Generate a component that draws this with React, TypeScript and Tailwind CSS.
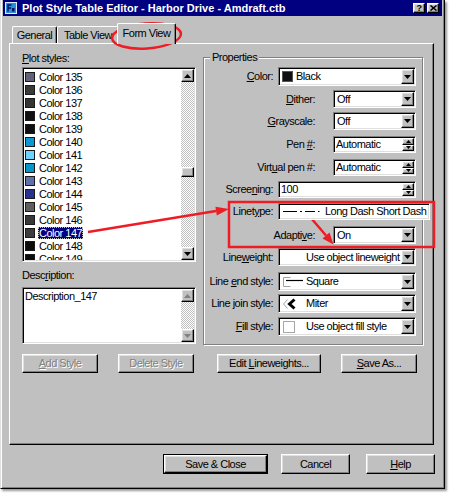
import React from "react";

const sunken =
  "border border-t-[#808080] border-l-[#808080] border-r-white border-b-white shadow-[inset_1px_1px_0_#000,inset_-1px_-1px_0_#dfdfdf] p-[1px]";
const raised =
  "border border-t-white border-l-white border-r-black border-b-black shadow-[inset_-1px_-1px_0_#808080,inset_1px_1px_0_#dfdfdf] bg-[#c0c0c0]";
const checker =
  "bg-[image:repeating-conic-gradient(#c0c0c0_0_25%,#ffffff_0_50%)] bg-[length:2px_2px]";
const disabledText = "text-[#808080] [text-shadow:1px_1px_0_#ffffff]";

function Tri({ up, color = "#000", small }: { up?: boolean; color?: string; small?: boolean }) {
  const w = small ? 5 : 7;
  const h = small ? 3 : 4;
  return (
    <svg width={w} height={h} viewBox={`0 0 ${w} ${h}`} className="block">
      {up ? (
        <path d={`M0 ${h}H${w}L${w / 2} 0z`} fill={color} />
      ) : (
        <path d={`M0 0H${w}L${w / 2} ${h}z`} fill={color} />
      )}
    </svg>
  );
}

function ScrollBtn({ up, disabled }: { up?: boolean; disabled?: boolean }) {
  return (
    <div className={`${raised} h-[13px] w-[13px] flex items-center justify-center shrink-0`}>
      <Tri up={up} color={disabled ? "#808080" : "#000"} />
    </div>
  );
}

function Combo({ className, children }: { className: string; children: React.ReactNode }) {
  return (
    <div className={`${sunken} ${className} bg-white flex`}>
      <div className="flex-1 min-w-0 flex items-center whitespace-nowrap overflow-hidden">{children}</div>
      <div className={`${raised} w-[13px] flex items-center justify-center`}>
        <Tri />
      </div>
    </div>
  );
}

function Spin({ className, children }: { className: string; children: React.ReactNode }) {
  return (
    <div className={`${sunken} ${className} bg-white flex`}>
      <div className="flex-1 min-w-0 flex items-center whitespace-nowrap">{children}</div>
      <div className="w-[12px] flex flex-col">
        <div className={`${raised} flex-1 flex items-center justify-center`}>
          <Tri up small />
        </div>
        <div className={`${raised} flex-1 flex items-center justify-center`}>
          <Tri small />
        </div>
      </div>
    </div>
  );
}

function Row({
  label,
  className,
  labelClass,
  children,
}: {
  label: React.ReactNode;
  className: string;
  labelClass: string;
  children: React.ReactNode;
}) {
  return (
    <div className={`flex items-center justify-end ${className}`}>
      <span className={`whitespace-nowrap leading-[13px] ${labelClass}`}>{label}</span>
      {children}
    </div>
  );
}

function Btn({
  className,
  children,
  disabled,
  isDefault,
}: {
  className: string;
  children: React.ReactNode;
  disabled?: boolean;
  isDefault?: boolean;
}) {
  const inner = (
    <div
      className={`${raised} h-full w-full flex items-center justify-center whitespace-nowrap ${
        disabled ? disabledText : ""
      }`}
    >
      <span>{children}</span>
    </div>
  );
  if (isDefault) {
    return <div className={`border border-black ${className}`}>{inner}</div>;
  }
  return <div className={className}>{inner}</div>;
}

const styles = [
  { n: "135", c: "bg-[#62627a]" },
  { n: "136", c: "bg-[#3a3a3a]" },
  { n: "137", c: "bg-[#343434]" },
  { n: "138", c: "bg-[#101010]" },
  { n: "139", c: "bg-[#101010]" },
  { n: "140", c: "bg-[#0a98d0]" },
  { n: "141", c: "bg-[#6cd2ff]" },
  { n: "142", c: "bg-[#0896c8]" },
  { n: "143", c: "bg-[#6070a8]" },
  { n: "144", c: "bg-[#283090]" },
  { n: "145", c: "bg-[#5e5e5e]" },
  { n: "146", c: "bg-[#383838]" },
  { n: "147", c: "bg-[#3c3c3c]" },
  { n: "148", c: "bg-[#0c0c0c]" },
  { n: "149", c: "bg-[#0c0c0c]" },
];

function TitleBar() {
  return (
    <div className="mx-[1px] h-[16px] bg-[#000080] flex items-center pl-[2px] pr-[3px]">
      <svg width="12" height="12" viewBox="0 0 12 12" className="shrink-0">
        <rect x="0.5" y="0.5" width="11" height="11" fill="#2a8fd8" stroke="#d8eeff" />
        <path d="M3 9.5V3h3.5M3 6h3" stroke="#001060" strokeWidth="1.4" fill="none" />
        <rect x="7" y="6" width="2.5" height="3.5" fill="#001060" />
      </svg>
      <span className="ml-[5px] text-white font-bold whitespace-nowrap leading-[14px] tracking-normal">
        Plot Style Table Editor - Harbor Drive - Amdraft.ctb
      </span>
      <div className="ml-auto flex gap-[2px]">
        <div className={`${raised} w-[12px] h-[10px] flex items-center justify-center text-[9px] font-bold leading-none`}>
          ?
        </div>
        <div className={`${raised} w-[12px] h-[10px] flex items-center justify-center`}>
          <svg width="7" height="6" viewBox="0 0 7 6">
            <path d="M0.5 0.5l6 5M6.5 0.5l-6 5" stroke="#000" strokeWidth="1.6" />
          </svg>
        </div>
      </div>
    </div>
  );
}

function Tabs() {
  const tab =
    "h-[17px] border-t border-l border-r border-t-white border-l-white border-r-black shadow-[inset_-1px_0_0_#808080] rounded-t-[2px] flex items-center justify-center whitespace-nowrap";
  return (
    <div className="mt-[7px] h-[20px] flex items-end pl-[10px]">
      <div className={`${tab} w-[45px]`}>General</div>
      <div className={`${tab} w-[62px]`}>Table View</div>
      <div
        className={`${tab} relative z-10 -ml-[2px] w-[59px] h-[21px] -mb-[1px] bg-[#c0c0c0] pb-[2px]`}
      >
        Form View
      </div>
    </div>
  );
}

function LeftColumn() {
  return (
    <div className="w-[174px] flex flex-col">
      <span className="h-[13px] leading-[13px]">
        <span className="underline">P</span>lot styles:
      </span>
      <div className={`${sunken} mt-[2px] h-[195px] bg-white flex`}>
        <div className="flex-1 overflow-hidden pt-[1px]">
          {styles.map((s) => (
            <div key={s.n} className="h-[13px] flex items-center pl-[1px]">
              <span className={`w-[10px] h-[10px] border border-[#1a1a1a] shrink-0 ${s.c}`} />
              {s.n === "147" ? (
                <span className="ml-[3px] px-[1px] leading-[12px] bg-[#000080] text-white outline outline-1 outline-dotted outline-[#c0c0c0] -outline-offset-1">
                  Color {s.n}
                </span>
              ) : (
                <span className="ml-[3px] px-[1px] leading-[12px]">Color {s.n}</span>
              )}
            </div>
          ))}
        </div>
        <div className="w-[13px] flex flex-col">
          <ScrollBtn up />
          <div className={`flex-1 flex flex-col ${checker}`}>
            <div className="h-[85px]" />
            <div className={`${raised} h-[10px]`} />
          </div>
          <ScrollBtn />
        </div>
      </div>
      <span className="mt-[7px] h-[13px] leading-[13px]">
        Desc<span className="underline">r</span>iption:
      </span>
      <div className={`${sunken} mt-[5px] h-[57px] bg-white flex`}>
        <div className="flex-1 pl-[1px] pt-[1px] leading-[13px]">Description_147</div>
        <div className="w-[13px] flex flex-col">
          <ScrollBtn up disabled />
          <div className={`flex-1 ${checker}`} />
          <ScrollBtn disabled />
        </div>
      </div>
      <div className="mt-[10px] flex gap-[20px]">
        <Btn className="w-[76px] h-[19px]" disabled>
          <span className="underline">A</span>dd Style
        </Btn>
        <Btn className="w-[76px] h-[19px]" disabled>
          Delete Style
        </Btn>
      </div>
    </div>
  );
}

function RightColumn() {
  const wide = "mr-[5px]";
  const narrow = "mr-[18px]";
  return (
    <div className="ml-[7px] w-[220px] flex flex-col">
      <div className="relative mt-[5px] h-[288px] border border-[#808080] shadow-[inset_1px_1px_0_#ffffff,1px_1px_0_#ffffff] pt-[9px] pr-[6px] flex flex-col">
        <span className="absolute left-[6px] -top-[7px] px-[2px] bg-[#c0c0c0] leading-[13px]">Properties</span>

        <Row label={<><span className="underline">C</span>olor:</>} className="" labelClass={wide}>
          <Combo className="w-[138px] h-[19px]">
            <span className="ml-[2px] w-[11px] h-[11px] bg-[#101010] border border-[#555] shrink-0" />
            <span className="ml-[3px]">Black</span>
          </Combo>
        </Row>
        <Row label={<><span className="underline">D</span>ither:</>} className="mt-[4px]" labelClass={narrow}>
          <Combo className="w-[83px] h-[18px]">
            <span className="ml-[2px]">Off</span>
          </Combo>
        </Row>
        <Row label={<><span className="underline">G</span>rayscale:</>} className="mt-[4px]" labelClass={narrow}>
          <Combo className="w-[83px] h-[18px]">
            <span className="ml-[2px]">Off</span>
          </Combo>
        </Row>
        <Row label={<>Pen <span className="underline">#</span>:</>} className="mt-[6px]" labelClass={narrow}>
          <Spin className="w-[83px] h-[17px]">
            <span className="ml-[1px]">Automatic</span>
          </Spin>
        </Row>
        <Row label={<>Virt<span className="underline">u</span>al pen #:</>} className="mt-[6px]" labelClass={narrow}>
          <Spin className="w-[83px] h-[17px]">
            <span className="ml-[1px]">Automatic</span>
          </Spin>
        </Row>
        <Row label={<>Scree<span className="underline">n</span>ing:</>} className="mt-[5px]" labelClass={wide}>
          <Spin className="w-[138px] h-[17px]">
            <span className="ml-[1px]">100</span>
          </Spin>
        </Row>
        <Row label={<>Linet<span className="underline">y</span>pe:</>} className="mt-[5px]" labelClass={wide}>
          <div className={`${sunken} relative z-10 -mr-[14px] w-[152px] h-[17px] bg-white flex items-center whitespace-nowrap`}>
            <svg width="38" height="5" viewBox="0 0 38 5" className="ml-[2px] shrink-0">
              <path d="M1 2.5h14M18 2.5h2M23 2.5h10M36 2.5h1.5" stroke="#000" strokeWidth="1" />
            </svg>
            <span className="ml-[5px]">Long Dash Short Dash</span>
          </div>
        </Row>
        <Row label={<>Adapti<span className="underline">v</span>e:</>} className="mt-[6px]" labelClass={narrow}>
          <Combo className="w-[83px] h-[18px]">
            <span className="ml-[2px]">On</span>
          </Combo>
        </Row>
        <Row label={<>Line<span className="underline">w</span>eight:</>} className="mt-[4px]" labelClass={wide}>
          <Combo className="w-[138px] h-[18px]">
            <span className="ml-[26px]">Use object lineweight</span>
          </Combo>
        </Row>
        <Row label={<>Line <span className="underline">e</span>nd style:</>} className="mt-[6px]" labelClass={wide}>
          <Combo className="w-[138px] h-[19px]">
            <svg width="22" height="12" viewBox="0 0 22 12" className="ml-[2px] shrink-0">
              <path d="M8.5 1.5H1.5V10.5H8.5" stroke="#a0a0a0" fill="none" />
              <path d="M4 4.5H21" stroke="#000" strokeWidth="1.2" />
            </svg>
            <span className="ml-[2px]">Square</span>
          </Combo>
        </Row>
        <Row label={<>Line <span className="underline">j</span>oin style:</>} className="mt-[3px]" labelClass={wide}>
          <Combo className="w-[138px] h-[19px]">
            <svg width="22" height="12" viewBox="0 0 22 12" className="ml-[2px] shrink-0">
              <path d="M5.5 1.5L1.5 6L5.5 10.5" stroke="#a0a0a0" fill="none" />
              <path d="M12.5 1.5L7.5 6L12.5 10.5" stroke="#000" strokeWidth="3" fill="none" />
            </svg>
            <span className="ml-[2px]">Miter</span>
          </Combo>
        </Row>
        <Row label={<><span className="underline">F</span>ill style:</>} className="mt-[4px]" labelClass={wide}>
          <Combo className="w-[138px] h-[19px]">
            <span className="ml-[3px] w-[12px] h-[12px] border border-[#a8a8a8] bg-white shrink-0" />
            <span className="ml-[11px]">Use object fill style</span>
          </Combo>
        </Row>
      </div>
      <div className="mt-[9px] flex pl-[14px] gap-[20px]">
        <Btn className="w-[104px] h-[19px]">
          Edit <span className="underline">L</span>ineweights...
        </Btn>
        <Btn className="w-[76px] h-[19px]">
          <span className="underline">S</span>ave As...
        </Btn>
      </div>
    </div>
  );
}

function Annotations() {
  return (
    <svg className="absolute left-0 top-0 pointer-events-none" width="450" height="493" viewBox="0 0 450 493">
      <g stroke="#ee1c24" fill="none" strokeWidth="2.5">
        <ellipse cx="146.5" cy="36" rx="34.5" ry="12.5" transform="rotate(-4 146.5 36)" />
        <rect x="229" y="202" width="205" height="45" />
        <path d="M88 232L216 211" />
        <path d="M311 218L326 235.5" />
      </g>
      <g fill="#ee1c24">
        <path d="M229 209L216.8 215.5L215.4 206.8z" />
        <path d="M333.5 244.5L322.5 238.5L329.5 232.5z" />
      </g>
    </svg>
  );
}

export default function App() {
  return (
    <div className="relative w-[450px] h-[493px] bg-white overflow-hidden [font-family:'Liberation_Sans',Arial,sans-serif] text-[11px] tracking-[-0.5px] text-black">
      <div className="w-[445px] h-[489px] bg-[#c0c0c0] border border-t-0 border-l-[#dfdfdf] border-r-black border-b-black px-[1px] pb-[1px] shadow-[inset_1px_0_0_#ffffff,inset_-1px_-1px_0_#808080,2px_2px_2px_rgba(0,0,0,0.4)] flex flex-col">
        <TitleBar />
        <Tabs />
        <div className="ml-[7px] w-[425px] h-[402px] border border-t-white border-l-white border-r-black border-b-black shadow-[inset_-1px_-1px_0_#808080] flex pt-[8px] pl-[12px]">
          <LeftColumn />
          <RightColumn />
        </div>
        <div className="mt-[9px] flex justify-end pr-[8px]">
          <Btn className="w-[105px] h-[20px]" isDefault>
            Save &amp; Close
          </Btn>
          <Btn className="ml-[13px] w-[69px] h-[20px]">Cancel</Btn>
          <Btn className="ml-[16px] w-[69px] h-[20px]">
            <span className="underline">H</span>elp
          </Btn>
        </div>
      </div>
      <Annotations />
    </div>
  );
}
